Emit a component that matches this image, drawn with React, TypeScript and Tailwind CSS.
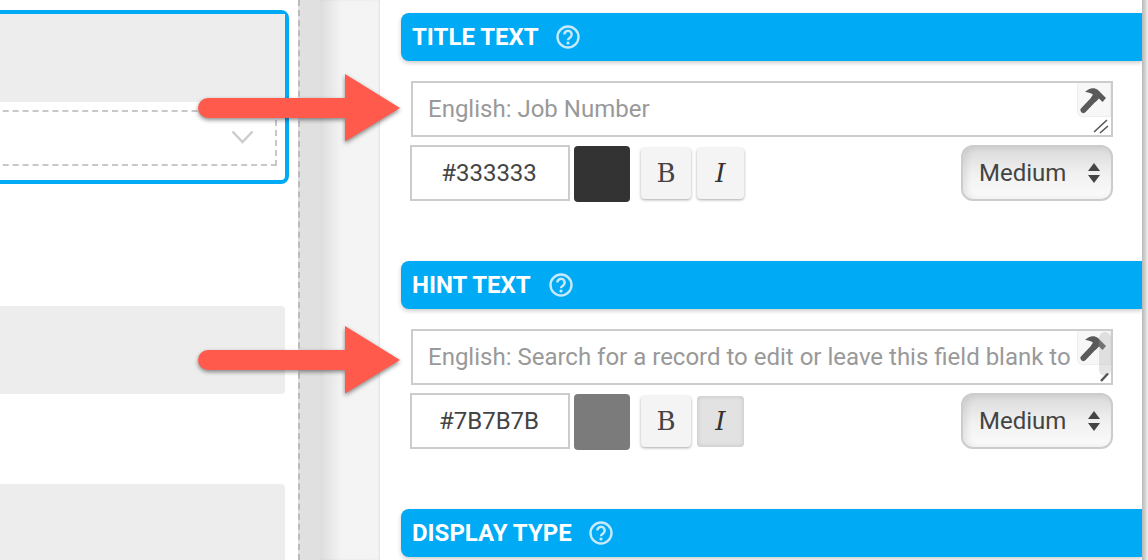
import React from "react";

function Arrow({ className }: { className: string }) {
    return (
        <svg className={className} width="220" height="84" viewBox="0 0 220 84" fill="none">
            <path
                d="M20 2 H157 V-22 L212 12 L157 45.500 V22 H20 A10 10 0 0 1 20 2 Z"
                transform="translate(0 24)"
                fill="#ff5a4c"
            />
        </svg>
    );
}

function Help() {
    return (
        <svg width="24" height="24" viewBox="0 0 24 24" fill="none" className="text-[#c6e9fb]">
            <circle cx="12" cy="12" r="10.500" stroke="currentColor" strokeWidth="2.400" />
            <path d="M8.300 9.500a3.700 3.700 0 1 1 5.900 3c-1.400 1-2.200 1.400-2.200 2.800" stroke="currentColor" strokeWidth="2.500" fill="none" />
            <circle cx="12" cy="18" r="1.600" fill="currentColor" />
        </svg>
    );
}

function Hammer() {
    return (
        <svg width="28" height="28" viewBox="0 0 28 28" fill="#5a5a5a">
            <path d="M14 13 L3.500 24" stroke="#5a5a5a" strokeWidth="6" strokeLinecap="round" />
            <path d="M5 6 C9 2 14 1 18 4 L20 6 L21.500 7.500 L26 12 L22.500 16 L19 12.500 L15.500 16 L11 11.500 L13 8.500 C10.500 7 8 6 5 6 Z" />
        </svg>
    );
}

function SectionBar({ title, gap }: { title: string; gap: string }) {
    return (
        <div className={`flex h-12 items-center rounded-l-lg bg-[#00aaf5] pl-[11px] shadow-[0_2px_4px_rgba(0,0,0,0.2)] ${gap}`}>
            <span className="text-[24px] font-bold text-white">{title}</span>
            <Help />
        </div>
    );
}

function TextField({ text, small }: { text: string; small?: boolean }) {
    return (
        <div className="relative mt-5 ml-[10px] flex h-[56px] w-[702px] items-center overflow-hidden border-2 border-[#ccc] bg-white pl-[15px] text-[24px] whitespace-nowrap text-[#999]">
            {text}
            <div className="absolute top-0 right-0 flex h-[34px] w-[34px] items-center justify-center rounded-bl-md border-r border-b border-l border-[#eee] bg-[#f7f7f7]">
                <Hammer />
            </div>
            {small && <div className="absolute top-[1px] right-0 h-[44px] w-[12px] rounded-full bg-[#aaa]/30" />}
            {small ? (
                <svg className="absolute right-[1px] bottom-[1px]" width="10" height="10" viewBox="0 0 10 10">
                    <path d="M1 9 L8 1.500" stroke="#555" strokeWidth="2.500" />
                </svg>
            ) : (
                <svg className="absolute right-[2px] bottom-[1px]" width="16" height="16" viewBox="0 0 16 16">
                    <path d="M1 14 L14 2 M7 15 L15 8" stroke="#555" strokeWidth="1.600" />
                </svg>
            )}
        </div>
    );
}

function StyleRow({ hex, swatch, italicOn }: { hex: string; swatch: string; italicOn?: boolean }) {
    return (
        <div className="mt-2 ml-[9px] flex h-[57px] items-center">
            <div className="flex h-[56px] w-[160px] items-center justify-center self-start border-2 border-[#ccc] pr-[2px] text-[24px] text-[#444]">{hex}</div>
            <div className={`mt-[1px] ml-1 h-[56px] w-[56px] rounded ${swatch}`} />
            <div className="ml-[11px] flex h-[51px] w-[50px] items-center justify-center rounded bg-[#f4f4f4] [font-family:'DejaVu_Serif',serif] text-[26px] text-[#444] shadow-[0_1px_3px_rgba(0,0,0,0.35)]">
                B
            </div>
            <div
                className={`ml-[6px] flex h-[51px] w-[47px] items-center justify-center rounded [font-family:'DejaVu_Serif',serif] text-[26px] text-[#333] italic ${
                    italicOn ? "bg-[#e2e2e2] shadow-[inset_0_0_5px_rgba(0,0,0,0.15)]" : "bg-[#f4f4f4] shadow-[0_1px_3px_rgba(0,0,0,0.35)]"
                }`}
            >
                I
            </div>
            <div className="mr-[29px] ml-auto flex h-[56px] w-[152px] items-center justify-between self-start rounded-xl border-2 border-[#ccc] bg-gradient-to-b from-[#d9d9d9] via-[#f0f0f0] to-[#fbfbfb] pr-[11px] pl-[16px] text-[24px] text-[#444] shadow-[inset_4px_0_6px_rgba(0,0,0,0.08)]">
                Medium
                <svg width="12" height="24" viewBox="0 0 12 24" fill="#444">
                    <path d="M6 2 L12 10 H0 Z M0 14 H12 L6 22 Z" />
                </svg>
            </div>
        </div>
    );
}

export default function App() {
    return (
        <div className="relative flex h-[560px] w-[1148px] overflow-hidden bg-white font-['Roboto',sans-serif]">
            {/* builder canvas */}
            <div className="flex w-[298px] shrink-0 flex-col items-end pt-[10px]">
                <div className="mr-[9px] h-[174px] w-[330px] shrink-0 rounded-lg border-4 border-[#00aaf5] bg-white">
                    <div className="h-[88px] bg-[#ededed]" />
                    <div className="mt-2 mr-2 flex h-[56px] items-center justify-end border-2 border-dashed border-[#c8c8c8] pr-[21px] pb-[2px]">
                        <svg width="23" height="15" viewBox="0 0 23 15" fill="none">
                            <path d="M1.500 1.500 L11.500 12 L21.500 1.500" stroke="#ccc" strokeWidth="2.500" />
                        </svg>
                    </div>
                </div>
                <div className="mt-[122px] mr-[13px] h-[88px] w-[330px] shrink-0 rounded bg-[#ededed]" />
                <div className="mt-[90px] mr-[13px] h-[88px] w-[330px] shrink-0 rounded bg-[#ededed]" />
            </div>

            {/* divider */}
            <div className="w-[22px] shrink-0 border-l-2 border-dashed border-[#bbb] bg-[#e0e0e0]" />
            <div className="w-[60px] shrink-0 bg-gradient-to-r from-[#dddddd] via-[#f3f3f3] via-35% to-[#f4f4f4] shadow-[inset_-1px_0_2px_rgba(0,0,0,0.08)]" />

            {/* settings panel */}
            <div className="w-[762px] shrink-0 pt-[13px] pl-[21px]">
                <SectionBar title="TITLE TEXT" gap="gap-[17px]" />
                <TextField text="English: Job Number" />
                <StyleRow hex="#333333" swatch="bg-[#333333]" />
                <div className="mt-[59px]">
                    <SectionBar title="HINT TEXT" gap="gap-[18px]" />
                </div>
                <TextField text="English: Search for a record to edit or leave this field blank to" small />
                <StyleRow hex="#7B7B7B" swatch="bg-[#7b7b7b]" italicOn />
                <div className="mt-[59px]">
                    <SectionBar title="DISPLAY TYPE" gap="gap-[17px]" />
                </div>
            </div>

            {/* scrollbar edge */}
            <div className="w-[6px] shrink-0 bg-gradient-to-r from-[#b8b8b8] via-[#d0d0d0] to-[#f2f2f2]" />

            {/* annotations */}
            <Arrow className="absolute top-[72px] left-[188px] drop-shadow-[0_2px_2px_rgba(0,0,0,0.45)]" />
            <Arrow className="absolute top-[324px] left-[188px] drop-shadow-[0_2px_2px_rgba(0,0,0,0.45)]" />
        </div>
    );
}
